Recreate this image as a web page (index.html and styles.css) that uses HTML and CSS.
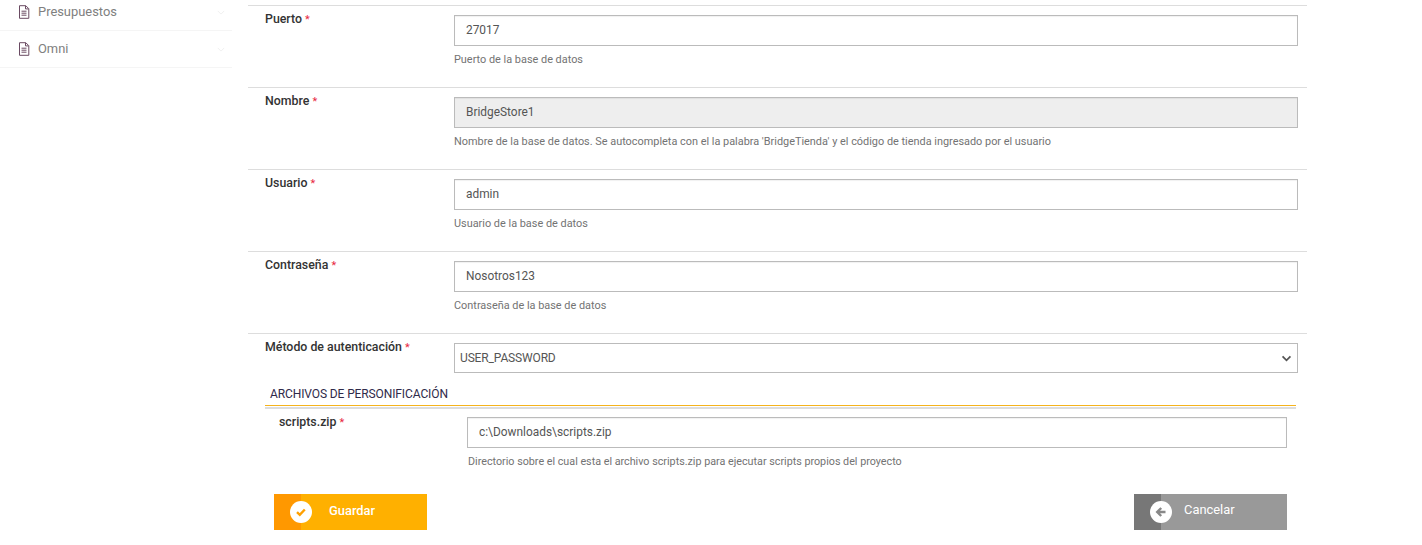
FILE: index.html
```html
<!DOCTYPE html>
<html lang="es">
<head>
<meta charset="utf-8">
<title>Configuración de base de datos</title>
<link rel="stylesheet" href="styles.css">
</head>
<body>
<div class="page">
  <aside class="sidebar">
    <a class="menu-item first">
      <svg class="doc" viewBox="0 0 12 14"><path d="M1.500.7h6.300l3 3v9.600h-9.300z M7.500.9v3h3 M3.500 6.200h5 M3.500 8.200h5 M3.500 10.200h5"/></svg>
      <span class="menu-label">Presupuestos</span>
      <svg class="chev" viewBox="0 0 10 6"><path d="M1 1l4 4 4-4"/></svg>
    </a>
    <a class="menu-item">
      <svg class="doc" viewBox="0 0 12 14"><path d="M1.500.7h6.300l3 3v9.600h-9.300z M7.500.9v3h3 M3.500 6.200h5 M3.500 8.200h5 M3.500 10.200h5"/></svg>
      <span class="menu-label">Omni</span>
      <svg class="chev" viewBox="0 0 10 6"><path d="M1 1l4 4 4-4"/></svg>
    </a>
  </aside>
  <main class="main">
    <div class="row">
      <label class="label">Puerto <span class="req">*</span></label>
      <div class="field">
        <input class="input" type="text" value="27017">
        <p class="help">Puerto de la base de datos</p>
      </div>
    </div>
    <div class="row">
      <label class="label">Nombre <span class="req">*</span></label>
      <div class="field">
        <input class="input" type="text" value="BridgeStore1" readonly data-disabled="1">
        <p class="help">Nombre de la base de datos. Se autocompleta con el la palabra 'BridgeTienda' y el código de tienda ingresado por el usuario</p>
      </div>
    </div>
    <div class="row">
      <label class="label">Usuario <span class="req">*</span></label>
      <div class="field">
        <input class="input" type="text" value="admin">
        <p class="help">Usuario de la base de datos</p>
      </div>
    </div>
    <div class="row">
      <label class="label">Contraseña <span class="req">*</span></label>
      <div class="field">
        <input class="input" type="text" value="Nosotros123">
        <p class="help">Contraseña de la base de datos</p>
      </div>
    </div>
    <div class="row row-select">
      <label class="label">Método de autenticación <span class="req">*</span></label>
      <div class="field">
        <div class="select">
          <span>USER_PASSWORD</span>
          <svg class="select-arrow" viewBox="0 0 12 8"><path d="M1.500 1.500l4.500 4.500 4.500-4.500"/></svg>
        </div>
      </div>
    </div>
    <section class="files">
      <h2 class="section-title">ARCHIVOS DE PERSONIFICACIÓN</h2>
      <div class="rule"></div>
      <div class="row-file">
        <label class="label">scripts.zip <span class="req">*</span></label>
        <div class="field">
          <input class="input" type="text" value="c:\Downloads\scripts.zip">
          <p class="help help-file">Directorio sobre el cual esta el archivo scripts.zip para ejecutar scripts propios del proyecto</p>
        </div>
      </div>
    </section>
    <div class="actions">
      <button class="btn btn-save" type="button">
        <span class="btn-side"><span class="btn-circle"><svg viewBox="0 0 12 12"><path d="M2 6.200l2.800 2.600 5-5.300"/></svg></span></span>
        <span class="btn-text">Guardar</span>
      </button>
      <button class="btn btn-cancel" type="button">
        <span class="btn-side"><span class="btn-circle"><svg viewBox="0 0 12 12"><path d="M10.500 6h-8 M6.200 2l-4 4 4 4"/></svg></span></span>
        <span class="btn-text">Cancelar</span>
      </button>
    </div>
  </main>
</div>
</body>
</html>
```

FILE: styles.css
```css
* { box-sizing: border-box; }
html, body { margin: 0; padding: 0; height: 545px; overflow: hidden; background: #fff; }
body { font-family: Roboto, "Liberation Sans", sans-serif; color: #333; }

.page { display: flex; align-items: flex-start; width: 1422px; height: 545px; overflow: hidden; }

.sidebar { width: 232px; flex: none; display: flex; flex-direction: column; }
.menu-item { display: flex; align-items: center; height: 37px; padding: 0 7px 0 18px; border-bottom: 1px solid #f5f5f5; }
.menu-item.first { height: 31px; padding-top: 0; align-items: flex-start; }
.menu-item.first .doc, .menu-item.first .menu-label, .menu-item.first .chev { margin-top: 5px; }
.menu-item.first .chev { margin-top: 10px; }
.doc { width: 12px; height: 14px; flex: none; fill: none; stroke: #6a4a62; stroke-width: 1; }
.menu-label { margin-left: 8px; font-size: 12.900px; line-height: 14px; color: #808080; flex: 1; }
.chev { width: 8px; height: 5px; flex: none; fill: none; stroke: #ececec; stroke-width: 1; }

.main { width: 1059px; margin: 5px 0 0 16px; flex: none; }

.row { display: flex; height: 82px; border-top: 1px solid #ddd; padding: 5px 9px 0 17px; }
.row-select { height: auto; }
.label { width: 189px; flex: none; font-size: 12.350px; line-height: 16px; font-weight: 500; color: #333; }
.req { color: #e8283f; font-weight: 400; font-size: 11px; }
.field { flex: 1; min-width: 0; }
.row .field { padding-top: 4px; }

.input { display: block; width: 100%; height: 31px; padding: 0 11px 2px; border: 1px solid #bbb; outline: 0; background: #fff; font: 11.900px Roboto, "Liberation Sans", sans-serif; color: #555; border-radius: 0; box-shadow: inset 0 1px 1px rgba(0,0,0,.06); }
.input[data-disabled] { background: #eee; }
.help { margin: 7px 0 0; font-size: 10.900px; line-height: 14px; color: #737373; }
.help-file { padding-left: 1px; font-size: 10.750px; }

.select { display: flex; align-items: center; justify-content: space-between; height: 30px; padding: 0 5px; border: 1px solid #bbb; background: #fff; font-size: 12px; letter-spacing: -.15px; color: #555; }
.select-arrow { width: 11px; height: 7px; fill: none; stroke: #555; stroke-width: 2; }

.files { margin: 14px 11px 0 17px; }
.section-title { margin: 0; padding-left: 5px; font-size: 12px; letter-spacing: -.11px; line-height: 14px; font-weight: 400; color: #2f2a4a; }
.rule { margin-top: 4px; height: 4px; border-top: 1px solid #f5b31c; border-bottom: 2px solid #ddd; }
.row-file { display: flex; padding: 5px 9px 0 14px; }
.row-file .label { width: 188px; }
.row-file .field { padding-top: 3px; }

.actions { display: flex; justify-content: space-between; margin: 25px 20px 0 26px; }
.btn { display: flex; align-items: center; width: 153px; height: 36px; padding: 0; border: 0; font: 500 12.900px Roboto, "Liberation Sans", sans-serif; color: #fff; text-align: left; }
.btn-side { display: flex; align-items: center; justify-content: flex-end; width: 27px; height: 36px; flex: none; }
.btn-circle { display: flex; align-items: center; justify-content: center; width: 22px; height: 22px; margin-right: -11px; border-radius: 50%; background: #fff; flex: none; }
.btn-circle svg { width: 12px; height: 12px; fill: none; stroke-width: 2.400; }
.btn-text { margin-left: 28px; margin-top: -4px; }
.btn-save { background: #ffb000; }
.btn-save .btn-side { background: #ff9800; }
.btn-save svg { stroke: #ffa000; }
.btn-cancel { background: #999; }
.btn-cancel .btn-side { background: #777; }
.btn-cancel svg { stroke: #888; }
.btn-cancel .btn-text { margin-top: -5px; margin-left: 23px; font-weight: 400; }
```
